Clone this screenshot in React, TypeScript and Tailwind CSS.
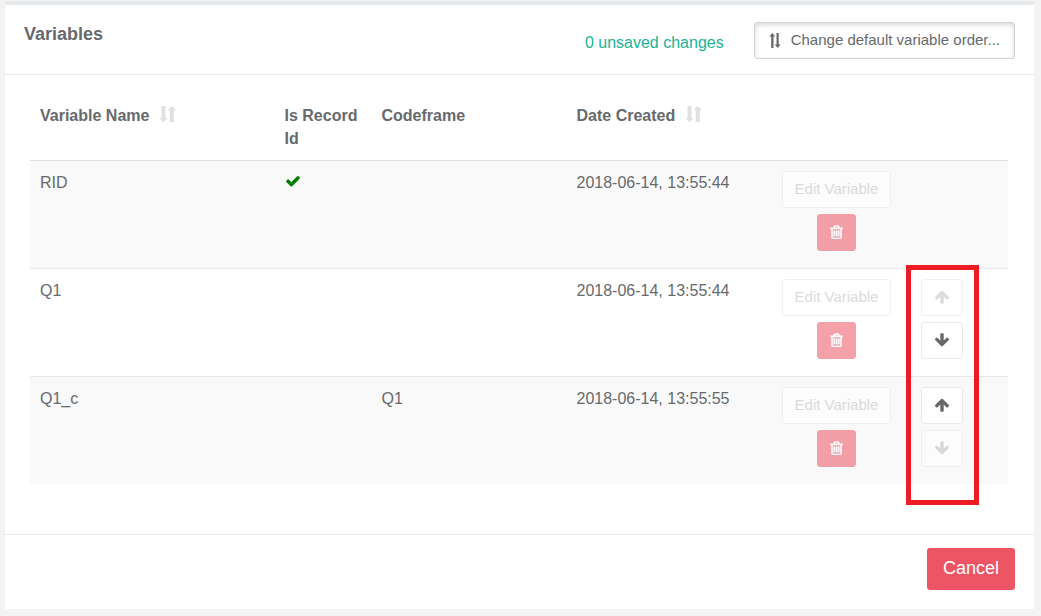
import { ReactNode } from "react";
import clsx from "clsx";

interface Variable {
  name: string;
  isRecordId: boolean;
  codeframe: string;
  created: string;
  canMoveUp: boolean;
  canMoveDown: boolean;
  movable: boolean;
}

const variables: Variable[] = [
  {
    name: "RID",
    isRecordId: true,
    codeframe: "",
    created: "2018-06-14, 13:55:44",
    canMoveUp: false,
    canMoveDown: false,
    movable: false,
  },
  {
    name: "Q1",
    isRecordId: false,
    codeframe: "",
    created: "2018-06-14, 13:55:44",
    canMoveUp: false,
    canMoveDown: true,
    movable: true,
  },
  {
    name: "Q1_c",
    isRecordId: false,
    codeframe: "Q1",
    created: "2018-06-14, 13:55:55",
    canMoveUp: true,
    canMoveDown: false,
    movable: true,
  },
];

const ARROW_UP =
  "M1675 971q0 51-37 90l-75 75q-38 38-91 38-54 0-90-38l-294-293v704q0 52-37.5 84.5t-90.5 32.5h-128q-53 0-90.5-32.5t-37.5-84.5v-704l-294 293q-36 38-90 38t-90-38l-75-75q-38-38-38-90 0-53 38-91l651-651q35-37 90-37 54 0 91 37l651 651q37 39 37 91z";
const ARROW_DOWN =
  "M1675 832q0 53-37 90l-651 652q-39 37-91 37-53 0-90-37l-651-652q-38-36-38-90 0-53 38-91l74-75q39-37 91-37 53 0 90 37l294 294v-704q0-52 38-90t90-38h128q52 0 90 38t38 90v704l294-294q37-37 90-37 52 0 91 37l75 75q37 39 37 91z";
const TRASH =
  "M704 736v576q0 14-9 23t-23 9h-64q-14 0-23-9t-9-23v-576q0-14 9-23t23-9h64q14 0 23 9t9 23zm256 0v576q0 14-9 23t-23 9h-64q-14 0-23-9t-9-23v-576q0-14 9-23t23-9h64q14 0 23 9t9 23zm256 0v576q0 14-9 23t-23 9h-64q-14 0-23-9t-9-23v-576q0-14 9-23t23-9h64q14 0 23 9t9 23zm128 724v-948h-896v948q0 22 7 40.5t14.5 27 10.5 8.5h832q3 0 10.5-8.5t14.5-27 7-40.5zm-672-1076h448l-48-117q-7-9-17-11h-317q-10 2-17 11zm928 32v64q0 14-9 23t-23 9h-96v948q0 83-47 143.5t-113 60.5h-832q-66 0-113-58.5t-47-141.5v-952h-96q-14 0-23-9t-9-23v-64q0-14 9-23t23-9h309l70-167q15-37 54-63t79-26h320q40 0 79 26t54 63l70 167h309q14 0 23 9t9 23z";
const CHECK =
  "M1671 566q0 40-28 68l-724 724-136 136q-28 28-68 28t-68-28l-136-136-362-362q-28-28-28-68t28-68l136-136q28-28 68-28t68 28l294 295 656-657q28-28 68-28t68 28l136 136q28 28 28 68z";

interface IconProps {
  d: string;
  viewBox?: string;
  className?: string;
}

function Icon({ d, viewBox = "0 0 1792 1792", className }: IconProps) {
  return (
    <svg
      viewBox={viewBox}
      fill="currentColor"
      aria-hidden="true"
      className={clsx("block", className)}
    >
      <path d={d} />
    </svg>
  );
}

function SortIcon() {
  return (
    <svg
      viewBox="0 0 17 17"
      fill="currentColor"
      aria-hidden="true"
      className="mb-0.5 size-[17px] text-[#e0e0e0]"
    >
      <path d="M2.500 0h4v12h2.300L4.500 16.300 0.300 12h2.200zM10.700 16V4.300H8.500L12.800 0l4.200 4.300h-2.200V16z" />
    </svg>
  );
}

function ReorderIcon() {
  return (
    <svg
      viewBox="0 0 12 16"
      fill="currentColor"
      aria-hidden="true"
      className="h-4 w-3"
    >
      <path d="M3.300 0l3 3.500H4.500V15H2.200V3.500H0.300zM7.500 0h2.200v11.500h1.800L8.700 15l-3-3.500h1.800z" />
    </svg>
  );
}

interface ButtonProps {
  label?: string;
  disabled?: boolean;
  className?: string;
  children: ReactNode;
}

function SmallButton({ label, disabled, className, children }: ButtonProps) {
  return (
    <button
      type="button"
      aria-label={label}
      disabled={disabled}
      className={clsx(
        "flex h-[37px] items-center rounded-[3px] border px-3 pb-0.5 text-[15px] leading-5 disabled:cursor-not-allowed",
        className
      )}
    >
      {children}
    </button>
  );
}

function MoveButton({
  label,
  d,
  enabled,
}: {
  label: string;
  d: string;
  enabled: boolean;
}) {
  return (
    <SmallButton
      label={label}
      disabled={!enabled}
      className={clsx(
        "border-[#e7eaec] bg-white",
        enabled ? "text-[#676a6c]" : "text-[#c8c9ca] opacity-65"
      )}
    >
      <Icon d={d} className="size-4" />
    </SmallButton>
  );
}

export default function App() {
  return (
    <div className="min-h-screen bg-[#f3f3f4] pt-px pr-[7px] pl-[5px] font-['Liberation_Sans',Arial,sans-serif] text-base text-[#676a6c]">
      <main className="border-t-4 border-[#e7eaec] bg-white">
        <header className="flex items-start justify-between border-b border-[#e7eaec] px-[19px] pt-[17px] pb-[15px]">
          <h1 className="text-lg leading-6 font-bold">Variables</h1>
          <div className="flex items-center gap-[30px]">
            <span className="pt-1 text-[#1ab394]">0 unsaved changes</span>
            <button
              type="button"
              className="flex h-[37px] items-center gap-2.5 rounded-[3px] border border-[#d2d2d2] bg-white px-3.5 text-[15px] shadow-[inset_0_2px_5px_rgba(0,0,0,0.15)]"
            >
              <ReorderIcon />
              Change default variable order...
            </button>
          </div>
        </header>

        <section className="pt-[19px] pr-[26px] pb-[50px] pl-[25px]">
          <div className="relative">
            <table className="w-full table-fixed border-separate border-spacing-0 text-left leading-[23px]">
              <colgroup>
                <col className="w-1/4" />
                <col className="w-[97px]" />
                <col className="w-[195px]" />
                <col />
                <col className="w-[131px]" />
                <col className="w-20" />
                <col className="w-[26px]" />
              </colgroup>
              <thead>
                <tr className="align-top">
                  <th className="p-2.5">
                    <span className="flex items-center gap-2.5">
                      Variable Name
                      <SortIcon />
                    </span>
                  </th>
                  <th className="p-2.5">Is Record Id</th>
                  <th className="p-2.5">Codeframe</th>
                  <th className="p-2.5">
                    <span className="flex items-center gap-2.5">
                      Date Created
                      <SortIcon />
                    </span>
                  </th>
                  <td colSpan={3} />
                </tr>
              </thead>
              <tbody>
                {variables.map((variable) => (
                  <tr
                    key={variable.name}
                    className="align-top odd:bg-[#f9f9f9] *:border-t *:border-[#e7eaec] first:*:border-[#dddddd]"
                  >
                    <td className="p-2.5">{variable.name}</td>
                    <td className="p-2.5">
                      {variable.isRecordId && (
                        <span
                          role="img"
                          aria-label="Yes"
                          className="flex h-5 items-center"
                        >
                          <Icon d={CHECK} className="size-4 text-[#008000]" />
                        </span>
                      )}
                    </td>
                    <td className="p-2.5">{variable.codeframe}</td>
                    <td className="p-2.5">{variable.created}</td>
                    <td className="pt-2.5 pb-[17px]">
                      <div className="flex flex-col items-center gap-1.5">
                        <SmallButton
                          disabled
                          className="border-[#e7eaec] bg-white text-[#c8c9ca] opacity-65"
                        >
                          Edit Variable
                        </SmallButton>
                        <SmallButton
                          label={`Delete ${variable.name}`}
                          disabled
                          className="border-[#ed5565] bg-[#ed5565] text-white opacity-55"
                        >
                          <Icon
                            d={TRASH}
                            viewBox="192 64 1408 1600"
                            className="h-3.5 w-[13px] stroke-current stroke-[60]"
                          />
                        </SmallButton>
                      </div>
                    </td>
                    <td className="pt-2.5">
                      {variable.movable && (
                        <div className="flex flex-col items-center gap-1.5">
                          <MoveButton
                            label={`Move ${variable.name} up`}
                            d={ARROW_UP}
                            enabled={variable.canMoveUp}
                          />
                          <MoveButton
                            label={`Move ${variable.name} down`}
                            d={ARROW_DOWN}
                            enabled={variable.canMoveDown}
                          />
                        </div>
                      )}
                    </td>
                    <td />
                  </tr>
                ))}
              </tbody>
            </table>

            {/* Highlight around the reorder controls */}
            <div className="pointer-events-none absolute right-[29px] -bottom-[21px] h-60 w-[73px] border-5 border-[#ed1c24]" />
          </div>
        </section>

        <footer className="flex justify-end border-t border-[#e7eaec] px-[19px] pt-[13px] pb-[19px]">
          <button
            type="button"
            className="h-[42px] rounded-[3px] bg-[#ed5565] px-4 pb-0.5 text-lg text-white"
          >
            Cancel
          </button>
        </footer>
      </main>
    </div>
  );
}
